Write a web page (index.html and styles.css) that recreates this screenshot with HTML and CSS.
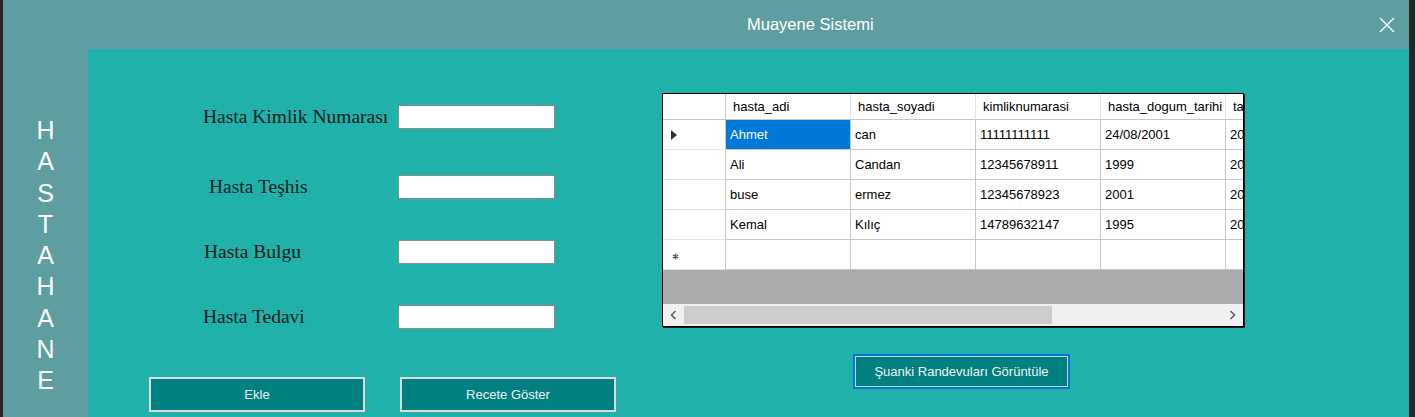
FILE: index.html
```html
<!DOCTYPE html>
<html lang="tr">
<head>
<meta charset="utf-8">
<title>Muayene Sistemi</title>
<link rel="stylesheet" href="styles.css">
</head>
<body>
<div class="window">
  <div class="titlebar">
    <span class="title">Muayene Sistemi</span>
    <span class="close">
      <svg width="16" height="16" viewBox="0 0 16 16"><path d="M1 1L15 15M15 1L1 15" stroke="#ffffff" stroke-width="1.3" fill="none"/></svg>
    </span>
  </div>
  <div class="main">
    <div class="sidebar">
      <span>H</span><span>A</span><span>S</span><span>T</span><span>A</span><span>H</span><span>A</span><span>N</span><span>E</span>
    </div>
    <div class="content">
      <div class="form-panel">
        <div class="fields">
          <div class="field"><label class="lbl">Hasta Kimlik Numarası</label><input class="tb" type="text"></div>
          <div class="field"><label class="lbl lbl-teshis">Hasta Teşhis</label><input class="tb" type="text"></div>
          <div class="field"><label class="lbl lbl-bulgu">Hasta Bulgu</label><input class="tb" type="text"></div>
          <div class="field"><label class="lbl">Hasta Tedavi</label><input class="tb" type="text"></div>
        </div>
        <div class="buttons">
          <button class="btn">Ekle</button>
          <button class="btn">Recete Göster</button>
        </div>
      </div>
      <div class="grid-panel">
        <div class="dgv">
          <div class="dgv-table">
            <div class="hc corner"></div>
            <div class="hc">hasta_adi</div>
            <div class="hc">hasta_soyadi</div>
            <div class="hc">kimliknumarasi</div>
            <div class="hc">hasta_dogum_tarihi</div>
            <div class="hc">tarih</div>

            <div class="rh"><svg width="6" height="10" viewBox="0 0 6 10"><path d="M0 0L6 5L0 10Z" fill="#333"/></svg></div>
            <div class="c sel">Ahmet</div>
            <div class="c">can</div>
            <div class="c">11111111111</div>
            <div class="c">24/08/2001</div>
            <div class="c">2022</div>

            <div class="rh"></div>
            <div class="c">Ali</div>
            <div class="c">Candan</div>
            <div class="c">12345678911</div>
            <div class="c">1999</div>
            <div class="c">2022</div>

            <div class="rh"></div>
            <div class="c">buse</div>
            <div class="c">ermez</div>
            <div class="c">12345678923</div>
            <div class="c">2001</div>
            <div class="c">2022</div>

            <div class="rh"></div>
            <div class="c">Kemal</div>
            <div class="c">Kılıç</div>
            <div class="c">14789632147</div>
            <div class="c">1995</div>
            <div class="c">2022</div>

            <div class="rh star"><svg width="7" height="7" viewBox="0 0 7 7"><path d="M3.5 0.5V6.5M0.8 2L6.2 5M0.8 5L6.2 2" stroke="#5a5a5a" stroke-width="1.3" fill="none"/></svg></div>
            <div class="c"></div>
            <div class="c"></div>
            <div class="c"></div>
            <div class="c"></div>
            <div class="c"></div>
          </div>
          <div class="dgv-empty"></div>
          <div class="hscroll">
            <span class="arrow"><svg width="7" height="10" viewBox="0 0 7 10"><path d="M5.5 1L1.5 5L5.5 9" stroke="#606060" stroke-width="1.6" fill="none"/></svg></span>
            <div class="track"><div class="thumb"></div></div>
            <span class="arrow"><svg width="7" height="10" viewBox="0 0 7 10"><path d="M1.5 1L5.5 5L1.5 9" stroke="#606060" stroke-width="1.6" fill="none"/></svg></span>
          </div>
        </div>
        <button class="btn btn-focus">Şuanki Randevuları Görüntüle</button>
      </div>
    </div>
  </div>
</div>
</body>
</html>
```

FILE: styles.css
```css
* { box-sizing: border-box; }

html, body {
  margin: 0;
  padding: 0;
  width: 1415px;
  height: 417px;
  overflow: hidden;
  background: #262628;
}

.window {
  margin: 0 6px 0 3px;
  height: 417px;
  display: flex;
  flex-direction: column;
  background: #5f9ea0;
}

.titlebar {
  height: 49px;
  flex: none;
  display: flex;
  align-items: center;
  padding: 0 14px 0 744px;
  background: #5f9ea0;
}

.title {
  font-family: "Liberation Sans", Arial, sans-serif;
  font-size: 16.5px;
  color: #ffffff;
}

.close {
  margin-left: auto;
  display: flex;
}

.main {
  flex: 1;
  display: flex;
  min-height: 0;
}

.sidebar {
  width: 85px;
  flex: none;
  display: flex;
  flex-direction: column;
  align-items: center;
  padding-top: 66px;
  font-family: "Liberation Sans", Arial, sans-serif;
  font-size: 25px;
  line-height: 31.25px;
  color: #ffffff;
}

.content {
  flex: 1;
  display: flex;
  background: #20b2aa;
}

.form-panel {
  width: 574px;
  flex: none;
  padding: 56px 0 0 61px;
  display: flex;
  flex-direction: column;
}

.fields {
  display: flex;
  flex-direction: column;
  gap: 41px;
}

.field {
  display: flex;
  align-items: center;
  height: 24px;
}

.field:first-child {
  margin-bottom: 5px;
}

.lbl {
  width: 249px;
  padding-left: 54px;
  font-family: "Liberation Serif", "Times New Roman", serif;
  font-size: 19.5px;
  color: #061a1a;
  white-space: nowrap;
}

.lbl-teshis { padding-left: 60px; }
.lbl-bulgu { padding-left: 55px; }

.tb {
  width: 157px;
  height: 24px;
  margin: 0;
  border: 1px solid #8c8c8c;
  background: #ffffff;
  padding: 0;
}

.buttons {
  margin-top: 48px;
  display: flex;
  gap: 35px;
}

.btn {
  width: 216px;
  height: 35px;
  margin: 0;
  padding: 0;
  background: #008080;
  border: 2px solid #dcdcdc;
  color: #f2f2f2;
  font-family: "Liberation Sans", Arial, sans-serif;
  font-size: 13px;
}

.grid-panel {
  padding-top: 44px;
  display: flex;
  flex-direction: column;
}

.dgv {
  width: 582px;
  height: 234px;
  border: 1px solid #000000;
  box-shadow: 1px 1px 0 #1a1a1a;
  background: #ababab;
  display: flex;
  flex-direction: column;
  overflow: hidden;
}

.dgv-table {
  display: grid;
  grid-template-columns: 63px repeat(5, 125px);
  grid-template-rows: 26px repeat(5, 30px);
  font-family: "Liberation Sans", Arial, sans-serif;
  font-size: 13px;
  color: #000000;
  background: #ffffff;
  width: 580px;
  overflow: hidden;
}

.hc {
  display: flex;
  align-items: center;
  padding-left: 7px;
  border-right: 1px solid #e2e2e2;
  border-bottom: 1px solid #c8c8c8;
  white-space: nowrap;
  overflow: hidden;
}

.corner {
  border-right: 1px solid #c8c8c8;
}

.rh {
  display: flex;
  align-items: center;
  padding-left: 8px;
  border-right: 1px solid #c8c8c8;
  border-bottom: 1px solid #e4e4e4;
}

.star {
  padding-left: 9px;
  padding-top: 4px;
}

.c {
  display: flex;
  align-items: center;
  padding-left: 4px;
  border-right: 1px solid #c8c8c8;
  border-bottom: 1px solid #c8c8c8;
  white-space: nowrap;
  overflow: hidden;
}

.sel {
  background: #0078d7;
  color: #ffffff;
}

.dgv-empty {
  flex: 1;
  background: #ababab;
}

.hscroll {
  height: 22px;
  flex: none;
  display: flex;
  align-items: center;
  background: #f0f0f0;
}

.arrow {
  width: 21px;
  height: 100%;
  display: flex;
  align-items: center;
  justify-content: center;
}

.track {
  flex: 1;
  height: 100%;
  padding: 2px 0;
}

.thumb {
  width: 368px;
  height: 100%;
  background: #cdcdcd;
}

.btn-focus {
  margin: 27px 0 0 191px;
  width: 217px;
  border: 2px solid #0078d7;
  box-shadow: inset 0 0 0 1px #cfcfcf;
}
```
